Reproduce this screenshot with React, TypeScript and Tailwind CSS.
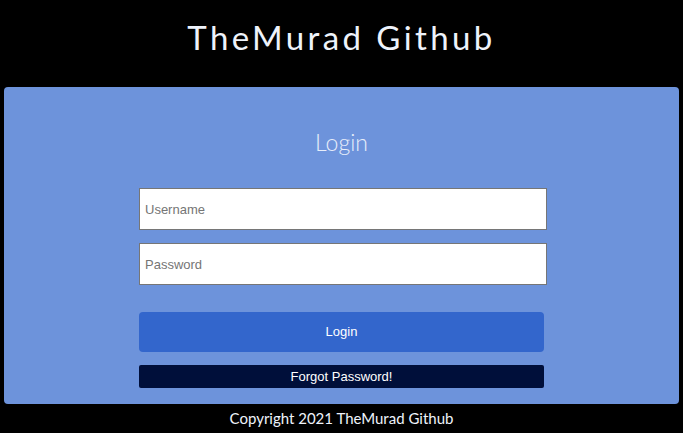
import React from 'react';

const App: React.FC = () => {
    return (
        <div className="min-h-[433px] w-full bg-black flex flex-col" style={{ fontFamily: 'Lato, sans-serif' }}>
            <header className="h-[87px] flex items-center justify-center">
                <h1 className="text-[33px] tracking-[3.4px] text-[#eef3fb] font-['Lato',sans-serif] leading-none pb-[12px]">TheMurad Github</h1>
            </header>

            <main className="mx-[4px] h-[317px] bg-[#6d93db] rounded-[4px] flex flex-col">
                <h2 className="text-center text-[23px] font-light text-[#e8eefa] mt-[41px] leading-[28px] font-['Lato',sans-serif]">Login</h2>
                <div className="pl-[135px] mt-[32px] flex flex-col font-['Liberation_Sans',Arial,sans-serif]">
                    <input
                        type="text"
                        placeholder="Username"
                        className="w-[408px] h-[42px] bg-white border border-[#767676] px-[5px] text-[13px] placeholder:text-[#757575] outline-none"
                    />
                    <input
                        type="password"
                        placeholder="Password"
                        className="w-[408px] h-[42px] mt-[13px] bg-white border border-[#767676] px-[5px] text-[13px] placeholder:text-[#757575] outline-none"
                    />
                    <button className="w-[405px] h-[40px] mt-[27px] bg-[#3366cc] rounded-[4px] text-white text-[13px]">Login</button>
                    <button className="w-[405px] h-[23px] mt-[13px] bg-[#000f3a] rounded-[2px] text-white text-[13px] leading-none">Forgot Password!</button>
                </div>
            </main>

            <footer className="h-[29px] flex items-center justify-center text-[15px] text-[#eef3fb] font-['Lato',sans-serif]">
                Copyright 2021 TheMurad Github
            </footer>
        </div>
    );
};

export default App;
